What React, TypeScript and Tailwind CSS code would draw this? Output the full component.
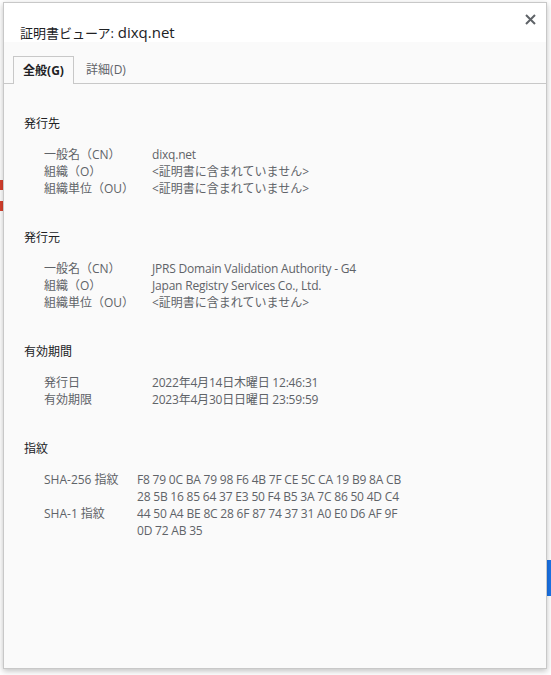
import React from "react";

type Row = { label: string; values: string[] };

const FONT = {
  fontFamily: '"Open Sans", "Noto Sans CJK JP", sans-serif',
};

const SECTIONS: { title: string; valueCol: string; rows: Row[] }[] = [
  {
    title: "発行先",
    valueCol: "w-[108px]",
    rows: [
      { label: "一般名（CN）", values: ["dixq.net"] },
      { label: "組織（O）", values: ["<証明書に含まれていません>"] },
      { label: "組織単位（OU）", values: ["<証明書に含まれていません>"] },
    ],
  },
  {
    title: "発行元",
    valueCol: "w-[108px]",
    rows: [
      { label: "一般名（CN）", values: ["JPRS Domain Validation Authority - G4"] },
      { label: "組織（O）", values: ["Japan Registry Services Co., Ltd."] },
      { label: "組織単位（OU）", values: ["<証明書に含まれていません>"] },
    ],
  },
  {
    title: "有効期間",
    valueCol: "w-[108px]",
    rows: [
      { label: "発行日", values: ["2022年4月14日木曜日 12:46:31"] },
      { label: "有効期限", values: ["2023年4月30日日曜日 23:59:59"] },
    ],
  },
  {
    title: "指紋",
    valueCol: "w-[93px]",
    rows: [
      {
        label: "SHA-256 指紋",
        values: [
          "F8 79 0C BA 79 98 F6 4B 7F CE 5C CA 19 B9 8A CB",
          "28 5B 16 85 64 37 E3 50 F4 B5 3A 7C 86 50 4D C4",
        ],
      },
      {
        label: "SHA-1 指紋",
        values: ["44 50 A4 BE 8C 28 6F 87 74 37 31 A0 E0 D6 AF 9F", "0D 72 AB 35"],
      },
    ],
  },
];

function Section({ title, valueCol, rows }: (typeof SECTIONS)[number]) {
  return (
    <section className="mb-[32px]">
      <h2 className="h-[17px] text-[12px] leading-[17px] text-[#202124]">{title}</h2>
      <div className="mt-[14px] pl-[20px]">
        {rows.map((row) => (
          <div key={row.label} className="flex text-[12px] leading-[17px] text-[#5f6368]">
            <div className={`${valueCol} shrink-0`}>{row.label}</div>
            <div>
              {row.values.map((v) => (
                <div key={v} className={v.startsWith("<") ? "" : "tracking-[-0.2px]"}>
                  {v}
                </div>
              ))}
            </div>
          </div>
        ))}
      </div>
    </section>
  );
}

export default function App() {
  return (
    <div className="relative h-[675px] w-[551px] overflow-hidden bg-white" style={FONT}>
      {/* page behind the dialog */}
      <div className="absolute left-0 top-[180px] h-[10px] w-[3px] bg-[#d9412e]" />
      <div className="absolute left-0 top-[201px] h-[10px] w-[3px] bg-[#d9412e]" />
      <div className="absolute right-0 top-[560px] h-[36px] w-[5px] bg-[#1a73e8]" />

      <div className="absolute left-[3px] top-[2px] flex h-[667px] w-[544px] flex-col border border-[#c8c8c8] bg-[#fafafa] shadow-[0_2px_6px_rgba(0,0,0,0.25)]">
        <div className="flex h-[39px] shrink-0 items-start justify-between bg-white">
          <h1 className="pl-[16px] pt-[19px] text-[15px] leading-[20px] text-[#202124]">
            <span className="text-[13px]">証明書ビューア:</span> dixq.net
          </h1>
          <button className="mr-[7px] mt-[7px] flex h-[18px] w-[18px] items-center justify-center text-[#5f6368]">
            <svg width="11" height="11" viewBox="0 0 11 11">
              <path d="M1 1 L10 10 M10 1 L1 10" stroke="currentColor" strokeWidth="2" />
            </svg>
          </button>
        </div>

        <div className="flex h-[42px] shrink-0 items-end border-b border-[#c8c8c8] pl-[9px]">
          <div className="-mb-px flex h-[28px] w-[61px] items-center justify-center border border-b-0 border-[#c8c8c8] bg-[#fafafa] text-[12px] font-bold text-[#202124]">
            全般(G)
          </div>
          <div className="flex h-[27px] w-[64px] items-center justify-center text-[12px] text-[#5f6368]">
            詳細(D)
          </div>
        </div>

        <div className="pl-[20px] pt-[31px]">
          {SECTIONS.map((s) => (
            <Section key={s.title} {...s} />
          ))}
        </div>
      </div>
    </div>
  );
}
